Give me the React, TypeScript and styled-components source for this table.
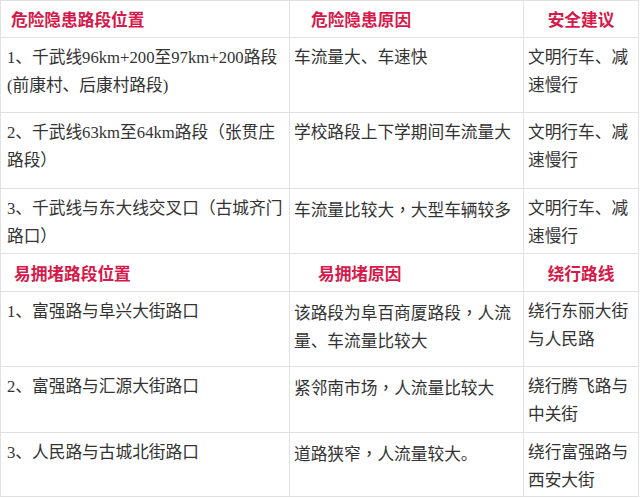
import React from 'react';
import styled, { createGlobalStyle } from 'styled-components';

const GlobalStyle = createGlobalStyle`
  html, body {
    margin: 0;
    padding: 0;
    background: #ffffff;
  }
  body {
    font-family: "Liberation Serif", "Noto Sans CJK SC", sans-serif;
    color: #333333;
  }
`;

interface Row {
  place: string;
  reason: string;
  advice: string;
  height: number;
}

interface Section {
  headers: [string, string, string];
  headerPad: [number, number];
  headerHeight: number;
  rows: Row[];
}

const sections: Section[] = [
  {
    headers: ['危险隐患路段位置', '危险隐患原因', '安全建议'],
    headerPad: [10, 21],
    headerHeight: 37,
    rows: [
      {
        place: '1、千武线96km+200至97km+200路段(前康村、后康村路段)',
        reason: '车流量大、车速快',
        advice: '文明行车、减速慢行',
        height: 75,
      },
      {
        place: '2、千武线63km至64km路段（张贯庄路段）',
        reason: '学校路段上下学期间车流量大',
        advice: '文明行车、减速慢行',
        height: 76,
      },
      {
        place: '3、千武线与东大线交叉口（古城齐门路口）',
        reason: '车流量比较大，大型车辆较多',
        advice: '文明行车、减速慢行',
        height: 65,
      },
    ],
  },
  {
    headers: ['易拥堵路段位置', '易拥堵原因', '绕行路线'],
    headerPad: [13, 28],
    headerHeight: 38,
    rows: [
      {
        place: '1、富强路与阜兴大街路口',
        reason: '该路段为阜百商厦路段，人流量、车流量比较大',
        advice: '绕行东丽大街与人民路',
        height: 75,
      },
      {
        place: '2、富强路与汇源大街路口',
        reason: '紧邻南市场，人流量比较大',
        advice: '绕行腾飞路与中关街',
        height: 66,
      },
      {
        place: '3、人民路与古城北街路口',
        reason: '道路狭窄，人流量较大。',
        advice: '绕行富强路与西安大街',
        height: 64,
      },
    ],
  },
];

// the source font sets the full-width comma in the middle of its box
const withCommas = (text: string) =>
  text.split('，').map((part, i) => (
    <React.Fragment key={i}>
      {i > 0 && <Comma>，</Comma>}
      {part}
    </React.Fragment>
  ));

const App = () => {
  return (
    <>
      <GlobalStyle />
      <StyledTable>
        <colgroup>
          <col width={289} />
          <col width={234} />
          <col width={115} />
        </colgroup>
        <tbody>
          {sections.map((section) => (
            <React.Fragment key={section.headers[0]}>
              <tr style={{ height: section.headerHeight }}>
                <HeadCell $pad={section.headerPad[0]}>{section.headers[0]}</HeadCell>
                <HeadCell $pad={section.headerPad[1]}>{section.headers[1]}</HeadCell>
                <HeadCell $center>{section.headers[2]}</HeadCell>
              </tr>
              {section.rows.map((row) => (
                <tr key={row.place} style={{ height: row.height }}>
                  <BodyCell $pad={6}>{row.place}</BodyCell>
                  <BodyCell>{withCommas(row.reason)}</BodyCell>
                  <BodyCell>{row.advice}</BodyCell>
                </tr>
              ))}
            </React.Fragment>
          ))}
        </tbody>
      </StyledTable>
    </>
  );
};

export default App;

const StyledTable = styled.table`
  border-collapse: collapse;
  table-layout: fixed;
  width: 638px;
  margin: 0;
  font-size: 16.7px;
  line-height: 28px;
`;

const _Cell = styled.td<{ $pad?: number }>`
  border: 1px solid #e2e2e2;
  padding: 0 0 0 ${({ $pad }) => ($pad ?? 4)}px;
  overflow: hidden;
`;

const HeadCell = styled(_Cell)<{ $center?: boolean }>`
  color: #d6194a;
  font-weight: bold;
  font-family: "Noto Sans CJK SC", sans-serif;
  vertical-align: middle;
  text-align: ${({ $center }) => ($center ? 'center' : 'left')};
  ${({ $center }) => $center && 'padding: 0;'}
`;

const BodyCell = styled(_Cell)`
  vertical-align: top;
  padding-top: 6px;
  padding-right: 2px;
  word-break: break-all;
`;

const Comma = styled.span`
  font-family: "Noto Sans CJK TC", sans-serif;
`;
